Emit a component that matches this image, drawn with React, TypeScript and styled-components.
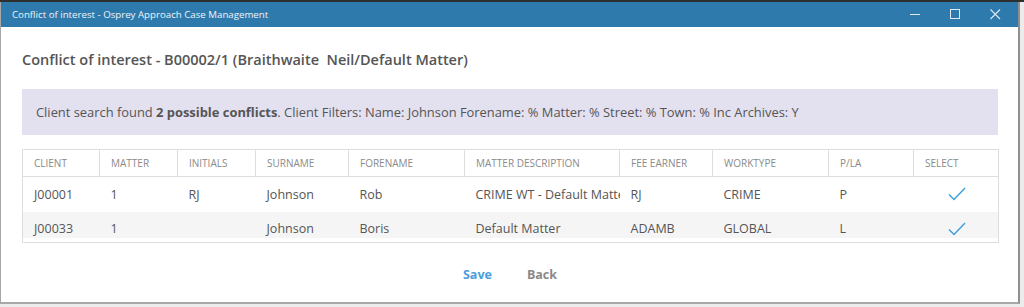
import styled, { createGlobalStyle } from "styled-components";

const GlobalStyle = createGlobalStyle`
  html, body {
    margin: 0;
    padding: 0;
    background: #ececec;
  }
  body {
    font-family: "Open Sans", "Noto Sans", sans-serif;
  }
`;

type Row = {
  client: string;
  matter: string;
  initials: string;
  surname: string;
  forename: string;
  description: string;
  feeEarner: string;
  worktype: string;
  pla: string;
};

const columns = [
  { key: "client", label: "CLIENT", width: 77 },
  { key: "matter", label: "MATTER", width: 78 },
  { key: "initials", label: "INITIALS", width: 78 },
  { key: "surname", label: "SURNAME", width: 93 },
  { key: "forename", label: "FORENAME", width: 116 },
  { key: "description", label: "MATTER DESCRIPTION", width: 155 },
  { key: "feeEarner", label: "FEE EARNER", width: 93 },
  { key: "worktype", label: "WORKTYPE", width: 116 },
  { key: "pla", label: "P/LA", width: 85 },
];

const rows: Row[] = [
  {
    client: "J00001",
    matter: "1",
    initials: "RJ",
    surname: "Johnson",
    forename: "Rob",
    description: "CRIME WT - Default Matter",
    feeEarner: "RJ",
    worktype: "CRIME",
    pla: "P",
  },
  {
    client: "J00033",
    matter: "1",
    initials: "",
    surname: "Johnson",
    forename: "Boris",
    description: "Default Matter",
    feeEarner: "ADAMB",
    worktype: "GLOBAL",
    pla: "L",
  },
];

export default function App() {
  return (
    <>
      <GlobalStyle />
      <Screen>
        <Window>
          <TitleBar>
            <TitleText>Conflict of interest - Osprey Approach Case Management</TitleText>
            <Controls>
              <CtrlButton>
                <svg width="11" height="11" viewBox="0 0 11 11">
                  <line x1="0" y1="5.5" x2="10" y2="5.5" stroke="#dfe9f2" strokeWidth="1" />
                </svg>
              </CtrlButton>
              <CtrlButton>
                <svg width="11" height="11" viewBox="0 0 11 11">
                  <rect x="0.5" y="0.5" width="9" height="9" fill="none" stroke="#dfe9f2" strokeWidth="1" />
                </svg>
              </CtrlButton>
              <CtrlButton>
                <svg width="11" height="11" viewBox="0 0 11 11">
                  <path d="M0.5 0.5 L10 10 M10 0.5 L0.5 10" stroke="#dfe9f2" strokeWidth="1.1" />
                </svg>
              </CtrlButton>
            </Controls>
          </TitleBar>
          <Content>
            <Heading>Conflict of interest - B00002/1 (Braithwaite&nbsp; Neil/Default Matter)</Heading>
            <Banner>
              Client search found <b>2 possible conflicts</b>. Client Filters: Name: Johnson Forename: % Matter: % Street: % Town: % Inc Archives: Y
            </Banner>
            <Table>
              <colgroup>
                {columns.map((c) => (
                  <col key={c.key} style={{ width: c.width }} />
                ))}
                <col />
              </colgroup>
              <thead>
                <tr>
                  {columns.map((c) => (
                    <Th key={c.key}>{c.label}</Th>
                  ))}
                  <Th>SELECT</Th>
                </tr>
              </thead>
              <tbody>
                {rows.map((r, i) => (
                  <Tr key={r.client} $striped={i % 2 === 1}>
                    {columns.map((c) => (
                      <Td key={c.key}>{r[c.key as keyof Row]}</Td>
                    ))}
                    <CheckCell>
                      <svg width="18" height="14" viewBox="0 0 18 14">
                        <path d="M1 7.5 L6 12.5 L17 1" fill="none" stroke="#3b9de0" strokeWidth="1.4" />
                      </svg>
                    </CheckCell>
                  </Tr>
                ))}
              </tbody>
            </Table>
            <Actions>
              <ActionButton $primary>Save</ActionButton>
              <ActionButton>Back</ActionButton>
            </Actions>
          </Content>
        </Window>
      </Screen>
    </>
  );
}

const Screen = styled.div`
  width: 1024px;
  height: 307px;
  overflow: hidden;
  border-top: 2px solid #2f2f2f;
  box-sizing: border-box;
  background: #ececec;
`;

const Window = styled.div`
  width: 1020px;
  height: 302px;
  box-sizing: border-box;
  border-left: 1px solid #a8a8a8;
  border-right: 2px solid #8f8f8f;
  border-bottom: 2px solid #a8a8a8;
  background: #fff;
  display: flex;
  flex-direction: column;
`;

const TitleBar = styled.div`
  height: 25px;
  flex-shrink: 0;
  background: #2e7aac;
  display: flex;
  align-items: center;
  justify-content: space-between;
  padding-left: 11px;
  padding-right: 3px;
`;

const TitleText = styled.div`
  font-size: 9.7px;
  color: #eef4f9;
`;

const Controls = styled.div`
  display: flex;
  height: 100%;
`;

const CtrlButton = styled.div`
  width: 40px;
  height: 100%;
  display: flex;
  align-items: center;
  justify-content: center;
`;

const Content = styled.div`
  padding: 0 20px 0 21px;
  display: flex;
  flex-direction: column;
`;

const Heading = styled.h1`
  margin: 23px 0 0;
  font-size: 14.5px;
  font-weight: 600;
  color: #555;
  line-height: 20px;
  white-space: pre;
`;

const Banner = styled.div`
  margin-top: 19px;
  height: 46px;
  flex-shrink: 0;
  display: flex;
  align-items: center;
  padding-left: 14px;
  background: #e3e0f0;
  color: #555;
  font-size: 12.9px;
  white-space: pre;

  b {
    font-weight: 700;
  }
`;

const Table = styled.table`
  margin-top: 14px;
  width: 977px;
  border-collapse: collapse;
  table-layout: fixed;
  border: 1px solid #dedede;
`;

const Th = styled.th`
  height: 26px;
  padding: 0 11px;
  text-align: left;
  font-size: 10px;
  font-weight: 400;
  color: #8a8a8a;
  border-right: 1px solid #dedede;
  border-bottom: 1px solid #dedede;

  &:last-child {
    border-right: none;
  }
`;

const Tr = styled.tr<{ $striped?: boolean }>`
  height: ${(p) => (p.$striped ? "31px" : "35px")};

  td {
    background: ${(p) => (p.$striped ? "linear-gradient(#f5f5f5 26px, #fff 26px)" : "#fff")};
    padding-top: ${(p) => (p.$striped ? "4px" : "0")};
  }
`;

const Td = styled.td`
  padding: 0 11px;
  font-size: 12.5px;
  color: #555;
  white-space: nowrap;
  overflow: hidden;
`;

const CheckCell = styled.td`
  padding: 0 0 0 34px;
  line-height: 0;
`;

const Actions = styled.div`
  display: flex;
  justify-content: center;
  gap: 35px;
  margin-top: 23px;
`;

const ActionButton = styled.div<{ $primary?: boolean }>`
  font-size: 12.5px;
  font-weight: 700;
  color: ${(p) => (p.$primary ? "#4b9de0" : "#8a8a8a")};
`;
